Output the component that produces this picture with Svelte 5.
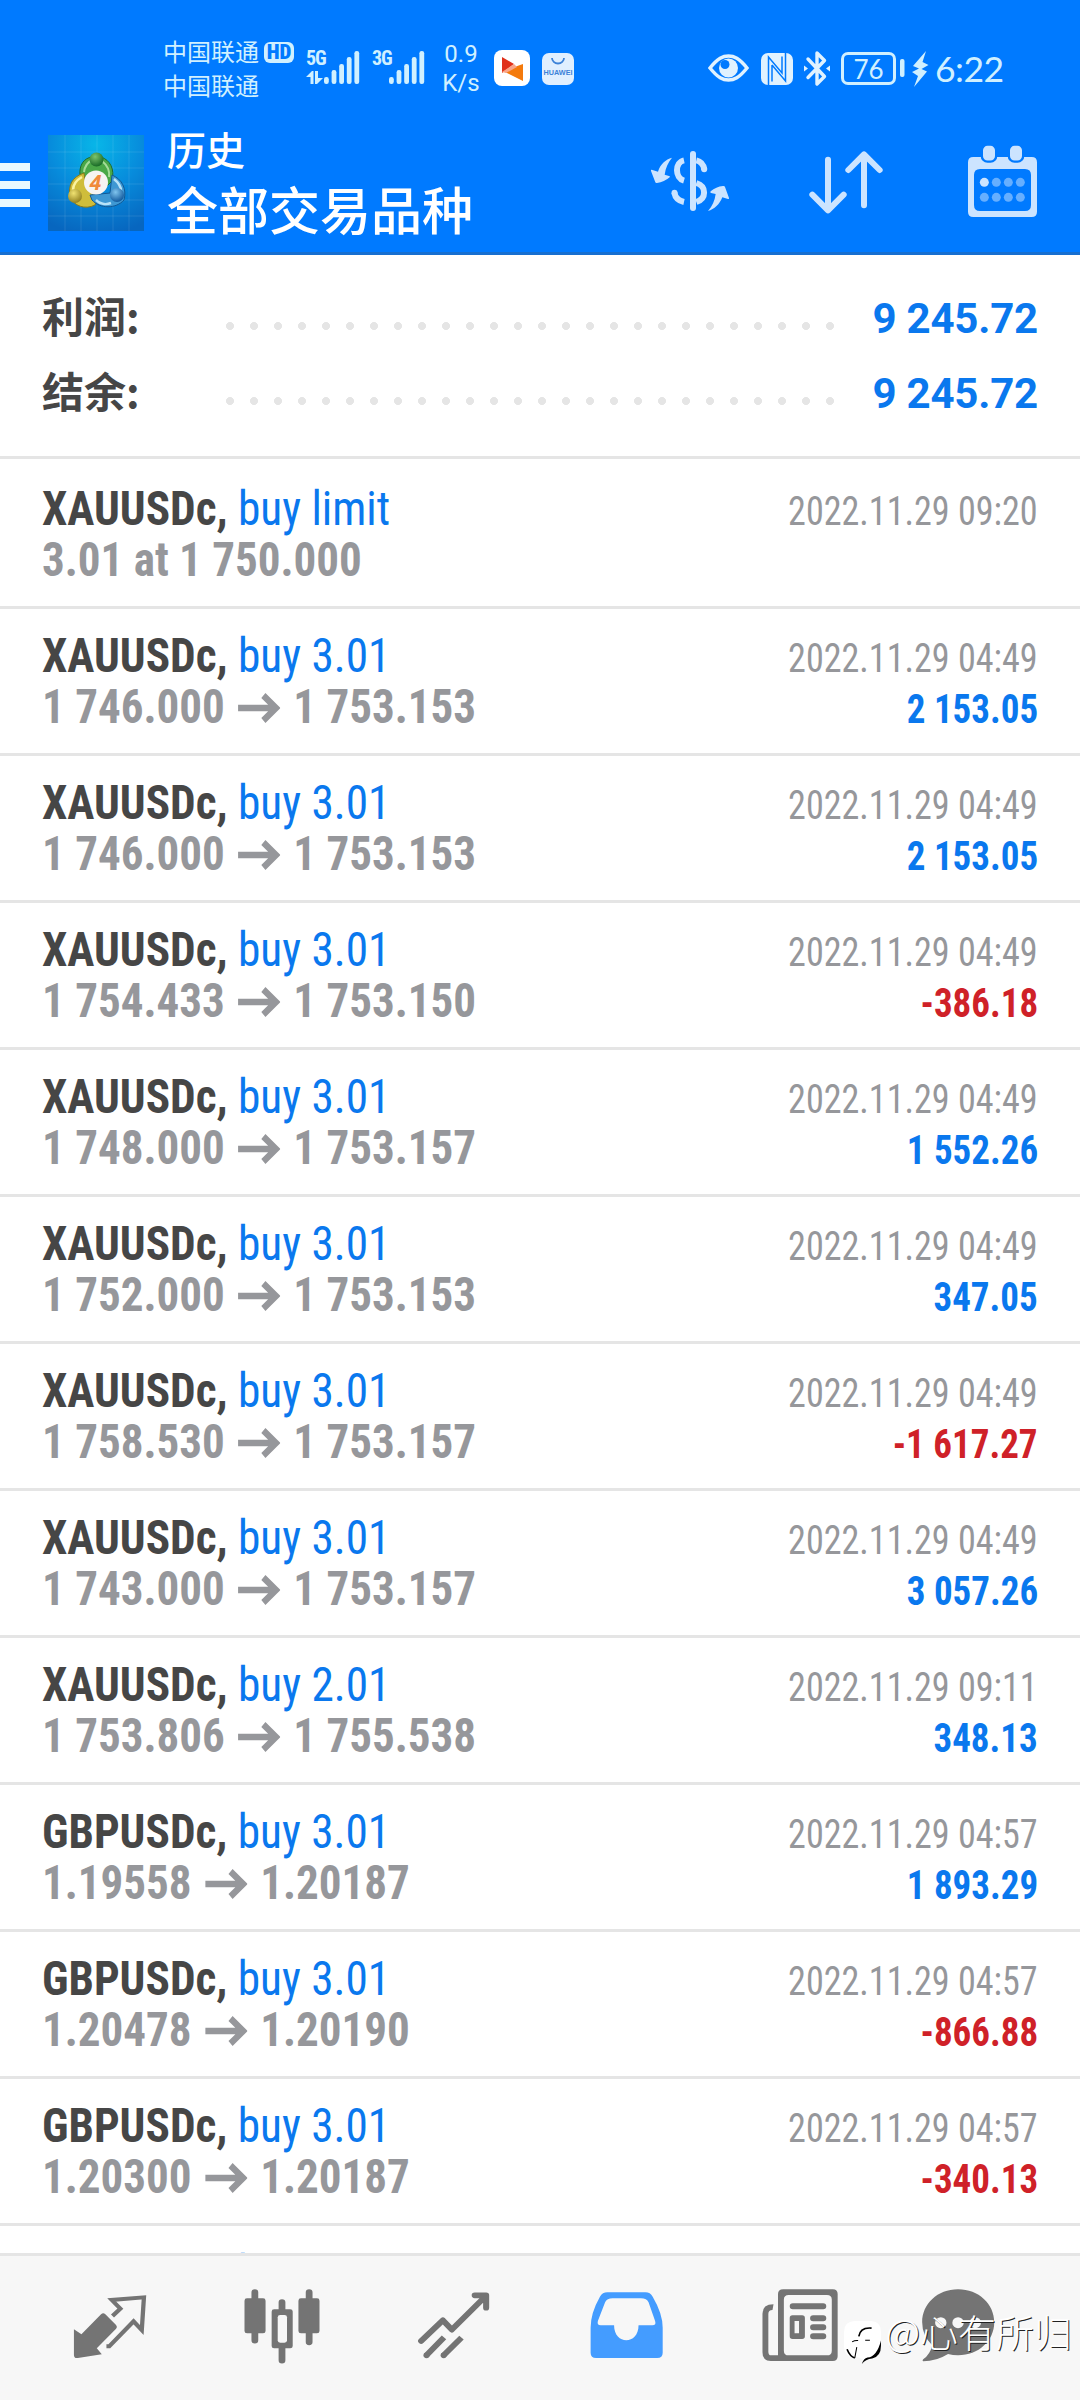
<script>
    const totals = [
        { label: '利润:', value: '9 245.72' },
        { label: '结余:', value: '9 245.72' },
    ];

    const deals = [
        { symbol: 'XAUUSDc', action: 'buy limit', text: '3.01 at 1 750.000', time: '2022.11.29 09:20' },
        { symbol: 'XAUUSDc', action: 'buy 3.01', from: '1 746.000', to: '1 753.153', time: '2022.11.29 04:49', profit: '2 153.05' },
        { symbol: 'XAUUSDc', action: 'buy 3.01', from: '1 746.000', to: '1 753.153', time: '2022.11.29 04:49', profit: '2 153.05' },
        { symbol: 'XAUUSDc', action: 'buy 3.01', from: '1 754.433', to: '1 753.150', time: '2022.11.29 04:49', profit: '-386.18' },
        { symbol: 'XAUUSDc', action: 'buy 3.01', from: '1 748.000', to: '1 753.157', time: '2022.11.29 04:49', profit: '1 552.26' },
        { symbol: 'XAUUSDc', action: 'buy 3.01', from: '1 752.000', to: '1 753.153', time: '2022.11.29 04:49', profit: '347.05' },
        { symbol: 'XAUUSDc', action: 'buy 3.01', from: '1 758.530', to: '1 753.157', time: '2022.11.29 04:49', profit: '-1 617.27' },
        { symbol: 'XAUUSDc', action: 'buy 3.01', from: '1 743.000', to: '1 753.157', time: '2022.11.29 04:49', profit: '3 057.26' },
        { symbol: 'XAUUSDc', action: 'buy 2.01', from: '1 753.806', to: '1 755.538', time: '2022.11.29 09:11', profit: '348.13' },
        { symbol: 'GBPUSDc', action: 'buy 3.01', from: '1.19558', to: '1.20187', time: '2022.11.29 04:57', profit: '1 893.29' },
        { symbol: 'GBPUSDc', action: 'buy 3.01', from: '1.20478', to: '1.20190', time: '2022.11.29 04:57', profit: '-866.88' },
        { symbol: 'GBPUSDc', action: 'buy 3.01', from: '1.20300', to: '1.20187', time: '2022.11.29 04:57', profit: '-340.13' },
        { symbol: 'GBPUSDc', action: 'buy' },
    ];

    const bars = [7, 14, 20, 27, 33];
</script>

{#snippet signal()}
    <svg class="signal" width="36" height="34" viewBox="0 0 36 34">
        {#each bars as h, i}
            <rect x={i * 7.6} y={34 - h} width="4.8" height={h} rx="2.2" />
        {/each}
    </svg>
{/snippet}

<div class="screen">
    <header>
        <div class="status">
            <div class="carriers">
                <div>中国联通</div>
                <div>中国联通</div>
            </div>
            <div class="hd">HD</div>
            <div class="net">
                <span>5G</span>
                <svg width="17" height="13" viewBox="0 0 17 13">
                    <path d="M0 6L6 0h1.5v13H4.5V6z M9 0h3v7h5l-6 6H9z" />
                </svg>
            </div>
            {@render signal()}
            <div class="net second"><span>3G</span></div>
            {@render signal()}
            <div class="speed">
                <div>0.9</div>
                <div>K/s</div>
            </div>
            <svg class="app" width="36" height="36" viewBox="0 0 36 36">
                <rect width="36" height="36" rx="8" fill="#fff" />
                <path d="M8 7L20 14L8 23z" fill="#e0301a" />
                <path d="M29 14V31L9 21z" fill="#f47a0c" />
                <path d="M8 22L20 14L23 17L12 23z" fill="#f8a58a" />
            </svg>
            <svg class="store" width="32" height="32" viewBox="0 0 32 32">
                <rect width="32" height="32" rx="7" fill="#e0efff" />
                <path d="M10 5a6 5.500 0 0 0 12 0" fill="none" stroke="#3c82d8" stroke-width="1.800" />
                <text x="1.500" y="21.500" textLength="29" lengthAdjust="spacingAndGlyphs">HUAWEI</text>
            </svg>

            <svg class="eye" width="41" height="28" viewBox="0 0 41 28">
                <path d="M2 14C10 4 15 2 20.500 2S31 4 39 14C31 24 26 26 20.500 26S10 24 2 14z" fill="none" stroke="#e0f2ff" stroke-width="3.500" />
                <circle cx="20.500" cy="14" r="9.500" fill="#e0f2ff" />
                <circle cx="17" cy="10.500" r="4.500" fill="#007aff" />
            </svg>
            <svg class="nfc" width="32" height="32" viewBox="0 0 32 32">
                <rect width="32" height="32" rx="7" fill="#e0f2ff" />
                <path d="M7.500 32V4L21 20V8M11 12V28.500M24.500 0V28L11 12M21 3.500V20" fill="none" stroke="#007aff" stroke-width="1.500" />
            </svg>
            <svg class="bt" width="26" height="37" viewBox="0 0 26 37">
                <path d="M4 9L20.500 26.500L13 34V3L20.500 10.500L4 27.500" fill="none" stroke="#e0f2ff" stroke-width="3.400" stroke-linejoin="round" stroke-linecap="round" />
                <path d="M0 15.500L4 18.500L0 21.500zM26 15.500L22 18.500L26 21.500z" fill="#e0f2ff" />
            </svg>
            <div class="battery">76</div>
            <svg class="nub" width="5" height="18"><rect width="4.500" height="18" rx="2" fill="#d0f0ff" /></svg>
            <svg class="bolt" width="17" height="36" viewBox="0 0 17 36">
                <path d="M14 0L1 15L7 17.500L0 21L6 25L2 36L15 20.500L9.500 18L16.500 14L10.500 11z" fill="#d0f0ff" />
            </svg>
            <div class="clock">6:22</div>
        </div>

        <div class="toolbar">
            <div class="burger"><i></i><i></i><i></i></div>
            <svg class="logo" width="96" height="96" viewBox="0 0 96 96">
                <defs>
                    <radialGradient id="sky" cx=".5" cy=".1" r=".95">
                        <stop offset="0" stop-color="#08b6e8" />
                        <stop offset=".5" stop-color="#078cdc" />
                        <stop offset="1" stop-color="#0766bf" />
                    </radialGradient>
                    <radialGradient id="green" cx=".4" cy=".3" r=".7">
                        <stop offset="0" stop-color="#7cc46c" />
                        <stop offset="1" stop-color="#186a26" />
                    </radialGradient>
                    <radialGradient id="gold" cx=".4" cy=".3" r=".7">
                        <stop offset="0" stop-color="#f0e272" />
                        <stop offset="1" stop-color="#93821f" />
                    </radialGradient>
                    <radialGradient id="blue" cx=".4" cy=".3" r=".7">
                        <stop offset="0" stop-color="#7fc4ee" />
                        <stop offset="1" stop-color="#125a9e" />
                    </radialGradient>
                </defs>
                <rect width="96" height="96" fill="url(#sky)" />
                <path d="M17 0V96M33 0V96M49 0V96M65 0V96M81 0V96M0 17H96M0 33H96M0 49H96M0 65H96M0 81H96" stroke="#fff" stroke-opacity=".1" />
                <path d="M32 40C31 30 36 23 44 22H53C62 25 67 34 64 46L59 51L54 38H42L38 44z" fill="#4aa848" stroke="#1e6b2a" />
                <path d="M36 37C37 30 40 27 44 25M61 42C62 35 59 30 54 26" fill="none" stroke="#a6dc98" stroke-width="2" />
                <path d="M36 38C24 42 20 50 22 62C26 71 37 75 47 70L50 62L38 52z" fill="#cfbd3a" stroke="#8a7a1a" />
                <path d="M34 42C27 46 25 50 25 55" fill="none" stroke="#fbf3a0" stroke-width="2.500" />
                <path d="M64 40C74 44 79 54 76 65C68 74 52 74 44 65L42 60L62 58z" fill="#3e98d3" stroke="#125894" />
                <path d="M66 44C71 48 73 52 73 56M48 65C52 69 58 70 63 68" fill="none" stroke="#b7e2f8" stroke-width="2.500" />
                <circle cx="48.500" cy="24.500" r="7" fill="url(#green)" />
                <circle cx="27" cy="61" r="7" fill="url(#gold)" />
                <circle cx="69" cy="60" r="7" fill="url(#blue)" />
                <circle cx="48" cy="47.500" r="12" fill="#f6f4f2" />
                <text x="47.500" y="55" text-anchor="middle">4</text>
            </svg>
            <div class="titles">
                <div class="sub">历史</div>
                <div class="main">全部交易品种</div>
            </div>
            <svg class="dollar" width="80" height="76" viewBox="90 72 240 228">
                <g fill="none" stroke="#cce4ff" stroke-width="18">
                    <path d="M192 121C164 127 164 174 192 182" />
                    <path d="M229 121C243 124 250 132 253 148" />
                    <path d="M163 218C166 234 178 243 192 246" />
                    <path d="M229 189C260 199 260 235 229 246" />
                    <path d="M219 102V264" stroke-width="18" stroke-linecap="round" />
                </g>
                <circle cx="252.500" cy="148" r="9" fill="#cce4ff" />
                <circle cx="163.500" cy="218" r="9" fill="#cce4ff" />
                <path d="M156 113C137 118 121 132 114 155L95 149Q92 149 93 153L106 187Q107 190 111 189Q133 186 149 172Q152 169 147 168L134 164C137 143 144 127 156 113z" fill="#cce4ff" />
                <path d="M264 273C283 268 299 253 307 232L324 237Q328 238 327 234L315 201Q314 197 309 198Q288 200 272 214Q269 217 273 219L287 222C284 243 277 259 264 273z" fill="#cce4ff" />
            </svg>
            <svg class="sort" width="76" height="76" viewBox="564 72 228 228">
                <g fill="none" stroke="#cce4ff" stroke-width="18" stroke-linecap="round" stroke-linejoin="round">
                    <path d="M624 119V270M577 224L624 271L671 224" />
                    <path d="M732 256V105M685 150L732 103L779 150" />
                </g>
            </svg>
            <svg class="calendar" width="74" height="76" viewBox="1038 72 222 228">
                <path fill-rule="evenodd" d="M1060 111H1235Q1251 111 1251 127V275Q1251 291 1235 291H1060Q1044 291 1044 275V127Q1044 111 1060 111zM1080 147Q1062 147 1062 165V255Q1062 273 1080 273H1215Q1233 273 1233 255V165Q1233 147 1215 147z" fill="#cce4ff" />
                <rect x="1085.500" y="74" width="43" height="51" rx="17" fill="#cce4ff" stroke="#007aff" stroke-width="7" />
                <rect x="1166.500" y="74" width="43" height="51" rx="17" fill="#cce4ff" stroke="#007aff" stroke-width="7" />
                {#each [187, 232] as cy}
                    {#each [1093, 1129, 1165, 1201] as cx}
                        <circle {cx} {cy} r="13.500" fill={cx === 1093 && cy === 187 ? '#cce4ff' : '#66afff'} />
                    {/each}
                {/each}
            </svg>
        </div>
    </header>

    <section class="totals">
        {#each totals as row}
            <div class="total">
                <span class="label">{row.label}</span>
                <span class="dots"></span>
                <span class="value">{row.value}</span>
            </div>
        {/each}
    </section>

    <main>
        {#each deals as deal}
            <div class="deal">
                <div class="line">
                    <div class="left name">{deal.symbol}, <span>{deal.action}</span></div>
                    {#if deal.time}
                        <div class="right time">{deal.time}</div>
                    {/if}
                </div>
                <div class="line">
                    {#if deal.text}
                        <div class="left price">{deal.text}</div>
                    {:else if deal.from}
                        <div class="left price">
                            {deal.from}
                            <svg width="45" height="30" viewBox="0 0 45 30">
                                <path d="M0 15H40M27 2.500L40.500 15L27 27.500" fill="none" stroke="#96979b" stroke-width="6.500" />
                            </svg>
                            {deal.to}
                        </div>
                        <div class="right profit" class:loss={deal.profit.startsWith('-')}>{deal.profit}</div>
                    {/if}
                </div>
            </div>
        {/each}
    </main>

    <nav>
        <svg viewBox="196 200 224 240" preserveAspectRatio="none">
            <path d="M207 327L228 342L283 282Q289 276 295 282L325 314Q330 320 325 325L271 384L285 402L218 413Q207 415 207 404z" fill="#747474" />
            <path d="M315 287L337 265L313 239L403 231L397 329L374 303L306 378H298" fill="none" stroke="#747474" stroke-width="12" />
        </svg>
        <svg viewBox="676 200 224 240" preserveAspectRatio="none">
            <path d="M712 216V360M864 216V365M788 246V275M788 380V420" stroke="#747474" stroke-width="19" stroke-linecap="round" />
            <rect x="683" y="234" width="59" height="105" rx="7" fill="#747474" />
            <rect x="834" y="234" width="59" height="105" rx="7" fill="#747474" />
            <rect x="759" y="267" width="59" height="117" rx="7" fill="#747474" />
            <rect x="776" y="284" width="26" height="83" rx="7" fill="#f7f7f7" />
        </svg>
        <svg viewBox="1158 200 224 240" preserveAspectRatio="none">
            <g fill="none" stroke="#747474" stroke-width="17" stroke-linejoin="round">
                <path d="M1178 362L1239 300L1264 328L1358 228M1328 225H1360V262" stroke-linecap="round" />
                <path d="M1192 406L1242 351M1240 406L1291 352" />
            </g>
            <circle cx="1193" cy="405" r="8.500" fill="#747474" />
            <circle cx="1241" cy="405" r="8.500" fill="#747474" />
        </svg>
        <svg viewBox="133.600 200 232 240" preserveAspectRatio="none">
            <path fill-rule="evenodd" d="M196 216H306Q320 216 327 229Q356 280 356 322V397Q356 413 340 413H163Q147 413 147 397V322Q147 278 174 229Q181 216 196 216zM211 234Q194 234 189 246L168 302Q165 315 176 315H215C215 375 286 375 286 315H326Q338 315 334 302L315 246Q310 234 293 234z" fill="#449cff" />
        </svg>
        <svg viewBox="633 200 232 240" preserveAspectRatio="none">
            <path fill-rule="evenodd" d="M706 207H850Q864 207 864 221V408Q864 422 850 422H670Q646 422 646 396V280Q646 252 678 252L675 269Q663 269 663 281V394Q663 405 671 405H691V221Q691 207 706 207zM722 224Q708 224 708 238V391Q708 405 722 405H833Q847 405 847 391V238Q847 224 833 224z" fill="#747474" />
            <path d="M734 258H822M793 294H822M793 321H822M793 348H822" stroke="#747474" stroke-width="18" stroke-linecap="round" />
            <path fill-rule="evenodd" d="M733 285H761Q769 285 769 293V348Q769 356 761 356H733Q725 356 725 348V293Q725 285 733 285zM739 302V339H752V302z" fill="#747474" />
        </svg>
        <svg viewBox="1094 200 232 240" preserveAspectRatio="none">
            <path d="M1213 207C1273 207 1318 251 1318 306S1273 405 1213 405Q1198 405 1184 401Q1150 423 1112 423Q1108 421 1112 417Q1132 403 1138 375Q1109 346 1109 306C1109 251 1153 207 1213 207z" fill="#747474" />
            <circle cx="1163" cy="307" r="16.500" fill="#f7f7f7" />
            <circle cx="1213" cy="307" r="16.500" fill="#f7f7f7" />
            <circle cx="1263" cy="307" r="16.500" fill="#f7f7f7" />
        </svg>
    </nav>

    <div class="watermark">
        <svg width="41" height="47" viewBox="30 56 122 140">
            <path d="M66 62H118Q146 64 146 94V136Q146 168 120 176L104 178Q94 182 88 191L92 176L72 168L66 174Q36 166 36 138V94Q36 64 66 62z" fill="#fff" />
            <path d="M146 120V136Q146 168 120 174Q100 176 89 190Q94 174 106 171Q134 168 146 120z" fill="#000" />
            <path d="M118 83Q84 80 80 108M45 146Q54 168 68 172" fill="none" stroke="#000" stroke-width="5" />
            <path d="M60 124Q68 119 78 120M99 119H113M74 140L68 172" fill="none" stroke="#000" stroke-width="3" />
        </svg>
        <span>@心有所归</span>
    </div>
</div>

<style>
    :global(body) {
        margin: 0;
        background: #fff;
    }

    .screen {
        position: relative;
        display: flex;
        flex-direction: column;
        width: 1080px;
        height: 2400px;
        overflow: hidden;
        background: #fff;
        font-family: Roboto, "Noto Sans CJK SC", sans-serif;
    }

    header {
        flex: none;
        height: 252px;
        background: #007aff;
        border-bottom: 3px solid #176fd0;
    }

    .status {
        display: flex;
        align-items: flex-start;
        height: 110px;
        padding-left: 163px;
        box-sizing: border-box;
        color: #d0f0ff;
    }

    .carriers {
        width: 96px;
        padding-top: 34px;
        font: 24px/34px "Noto Sans CJK SC", sans-serif;
    }

    .hd {
        width: 30px;
        height: 21px;
        margin: 42px 0 0 5px;
        border-radius: 6px;
        background: #d0f0ff;
        color: #007aff;
        font: 900 21px/21px "Roboto Condensed", sans-serif;
        text-align: center;
    }

    .net {
        display: flex;
        flex-direction: column;
        gap: 5px;
        width: 18px;
        margin: 51px 0 0 12px;
        font: 700 20px/15px "Roboto Condensed", sans-serif;
    }

    .net span {
        letter-spacing: -1px;
    }

    .net.second {
        margin-left: 12px;
        width: 17px;
    }

    .net svg,
    .signal {
        fill: #d0f0ff;
    }

    .signal {
        margin-top: 50px;
    }

    .speed {
        width: 40px;
        margin: 40px 0 0 16px;
        font-size: 24px;
        line-height: 29px;
        text-align: center;
    }

    .app {
        margin: 50px 0 0 13px;
    }

    .store {
        margin: 53px 0 0 12px;
    }

    .store text {
        font: 700 7px "Liberation Sans", sans-serif;
        fill: #3c82d8;
    }

    .eye {
        margin: 54px 0 0 134px;
    }

    .nfc {
        margin: 53px 0 0 12px;
    }

    .bt {
        margin: 50px 0 0 11px;
    }

    .battery {
        width: 55px;
        height: 33px;
        margin: 52px 0 0 11px;
        box-sizing: border-box;
        border: 3px solid #d0f0ff;
        border-radius: 7px;
        font: 26px/28px Lato, sans-serif;
        text-align: center;
    }

    .nub {
        margin: 59px 0 0 4px;
    }

    .bolt {
        margin: 51px 0 0 7px;
    }

    .clock {
        margin: 47px 0 0 6px;
        font: 35.5px/44px Lato, sans-serif;
        letter-spacing: -0.5px;
    }

    .toolbar {
        display: flex;
        align-items: flex-start;
        height: 142px;
    }

    .burger {
        display: flex;
        flex-direction: column;
        gap: 10px;
        width: 30px;
        margin: 53px 18px 0 0;
    }

    .burger i {
        height: 8px;
        background: #e8f8ff;
    }

    .logo {
        margin-top: 25px;
    }

    .logo text {
        font: italic 700 21px "Open Sans", sans-serif;
        fill: #f08a3c;
    }

    .titles {
        display: flex;
        flex-direction: column;
        gap: 6px;
        flex: 1;
        padding: 14px 0 0 23px;
        margin-right: 1px;
        color: #fff;
        font-family: "Noto Sans CJK SC", sans-serif;
        font-weight: 500;
    }

    .sub {
        font-size: 39px;
        line-height: 48px;
    }

    .main {
        font-size: 51px;
        line-height: 60px;
    }

    .dollar,
    .sort,
    .calendar {
        margin-top: 34px;
    }

    .sort {
        margin-left: 78px;
    }

    .calendar {
        margin: 34px 40px 0 82px;
    }

    .totals {
        flex: none;
        padding: 22px 42px 29px;
        border-bottom: 3px solid #e5e5e5;
    }

    .total {
        display: flex;
        align-items: baseline;
        height: 75px;
        font-size: 42px;
        line-height: 75px;
        font-weight: 700;
    }

    .label {
        width: 184px;
        color: #464646;
        font-family: "Noto Sans CJK SC", sans-serif;
    }

    .dots {
        align-self: flex-start;
        width: 608px;
        height: 8px;
        margin-top: 45px;
        background: radial-gradient(circle at 4px 4px, #e5e5e5 3.7px, transparent 4.3px) 0 0 / 24px 8px;
    }

    .value {
        margin-left: auto;
        color: #0a78ee;
        letter-spacing: -0.2px;
    }

    main {
        flex: 1;
        min-height: 0;
        padding-top: 3px;
        overflow: hidden;
        font-family: "Roboto Condensed", Roboto, sans-serif;
    }

    .deal {
        height: 102px;
        padding: 21px 42px;
        border-bottom: 3px solid #e5e5e5;
    }

    .line {
        display: flex;
        justify-content: space-between;
        align-items: baseline;
        height: 51px;
        line-height: 51px;
        white-space: nowrap;
    }

    .left {
        font-size: 48px;
        font-weight: 700;
        transform: scaleX(0.943);
        transform-origin: left;
    }

    .right {
        font-size: 40px;
        transform-origin: right;
    }

    .name {
        color: #464646;
    }

    .name span {
        color: #0a78ee;
        font-weight: 400;
    }

    .price,
    .time {
        color: #96979b;
    }

    .price {
        transform: scaleX(0.938);
    }

    .price svg {
        margin: 0 3px;
    }

    .time {
        transform: scaleX(0.902);
    }

    .profit {
        color: #0a78ee;
        font-weight: 700;
        transform: scaleX(0.925);
    }

    .profit.loss {
        color: #cf2128;
    }

    nav {
        display: grid;
        grid-template-columns: repeat(5, 172px) 145px;
        justify-items: center;
        flex: none;
        height: 147px;
        padding: 31px 0 0 24px;
        box-sizing: border-box;
        border-top: 3px solid #e5e5e5;
        background: #f7f7f7;
    }

    nav svg {
        width: 80px;
        height: 80px;
    }

    .watermark {
        position: absolute;
        right: 8px;
        top: 2306px;
        display: flex;
        align-items: flex-start;
        gap: 2px;
        color: #fff;
        font: 300 38px/50px "Noto Sans CJK SC", sans-serif;
        text-shadow: 1px 1px 0.5px #222;
    }

    .watermark svg {
        margin-top: 13px;
    }
</style>
